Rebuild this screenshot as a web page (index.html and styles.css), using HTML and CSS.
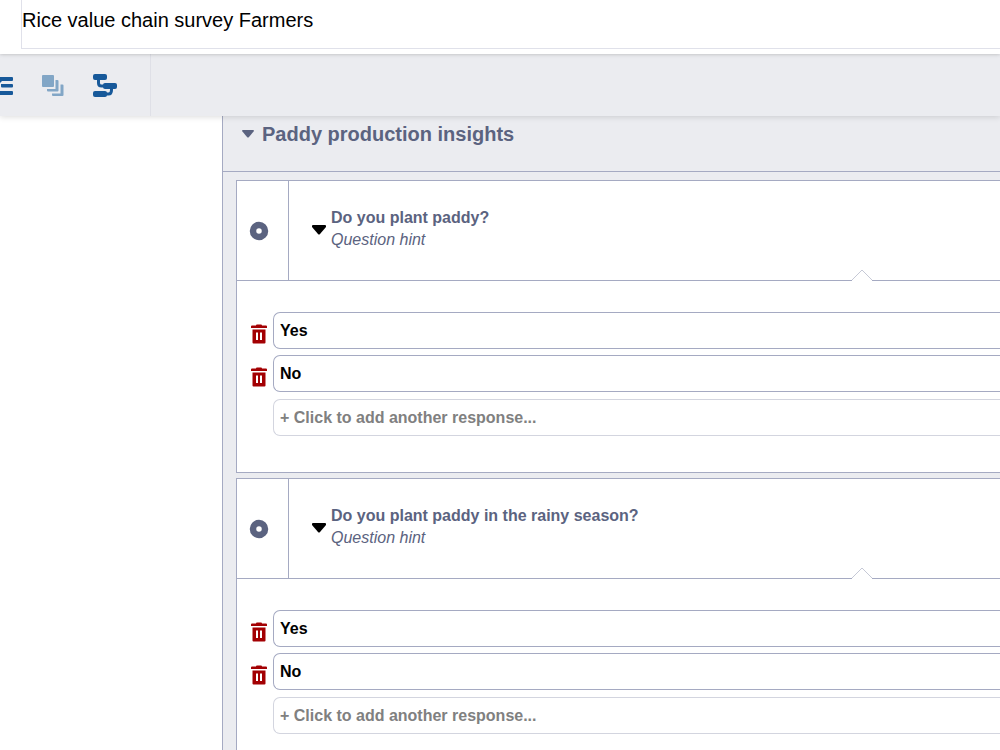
FILE: index.html
```html
<!DOCTYPE html>
<html lang="en">
<head>
    <meta charset="UTF-8">
    <meta name="viewport" content="width=device-width, initial-scale=1.0">
    <title>Rice value chain survey Farmers</title>
    <link rel="stylesheet" href="styles.css">
</head>
<body>
    <header class="topbar">
        <input class="form-title" type="text" value="Rice value chain survey Farmers" aria-label="Form title">
    </header>

    <nav class="toolbar">
        <div class="toolbar-buttons">
            <button type="button" class="tool" aria-label="List">
                <svg width="24" height="24" viewBox="0 0 24 24" fill="#17599a">
                    <path d="M0 3h23q1 0 1 1v2q0 1-1 1H13l-2 2H0zM12 10h11q1 0 1 1v1.500q0 1-1 1H13q-1 0-1-1zM11 17h12q1 0 1 1v2q0 1-1 1H11z"/>
                </svg>
            </button>
            <button type="button" class="tool" aria-label="Group questions">
                <svg width="24" height="24" viewBox="0 0 24 24" fill="#82a6c6">
                    <rect x="1" y="1" width="12" height="12" rx="1"/>
                    <path d="M14.500 6h2q1 0 1 1v9.500q0 1-1 1H7q-1 0-1-1V15h8.500z"/>
                    <path d="M19.500 10.500h2q1 0 1 1V21q0 1-1 1H12q-1 0-1-1v-1.500h8.500z"/>
                </svg>
            </button>
            <button type="button" class="tool" aria-label="Skip logic">
                <svg width="24" height="24" viewBox="0 0 24 24" fill="#17599a">
                    <rect x="0" y="0" width="14" height="6" rx="2"/>
                    <rect x="10" y="9" width="14" height="6" rx="2"/>
                    <rect x="0" y="17" width="14" height="6" rx="2"/>
                    <path d="M5.500 4v5q0 3 3 3h4M18.500 13v3q0 4-3 4h-4" fill="none" stroke="#17599a" stroke-width="3"/>
                </svg>
            </button>
        </div>
    </nav>

    <main class="canvas">
        <section class="group">
            <header class="group-header">
                <svg class="group-caret" width="12" height="8" viewBox="0 0 12 8"><path d="M1 0h10q1 0 1 1L7 7q-1 1-2 0L0 1q0-1 1-1z" fill="#5b6380"/></svg>
                <h2>Paddy production insights</h2>
            </header>

            <div class="questions">
                <article class="card">
                    <div class="card-header">
                        <div class="card-type">
                            <svg width="20" height="20" viewBox="0 0 20 20"><circle cx="10" cy="10" r="6" fill="none" stroke="#5b6380" stroke-width="6.500"/></svg>
                        </div>
                        <div class="card-question">
                            <svg class="card-caret" width="14" height="10" viewBox="0 0 14 10"><path d="M1 0h12q1 0 1 1v1L8 9q-1 1-2 0L0 2V1q0-1 1-1z"/></svg>
                            <div class="card-text">
                                <h3>Do you plant paddy?</h3>
                                <input class="hint" type="text" placeholder="Question hint" aria-label="Question hint">
                            </div>
                        </div>
                        <svg class="card-notch" width="22" height="12" viewBox="0 0 22 12"><path d="M1 11L11 1l10 10v1H1z" fill="#fff"/><path d="M1 11L11 1l10 10" fill="none" stroke="#c6c9d6"/></svg>
                    </div>
                    <div class="responses">
                        <div class="response">
                            <button type="button" class="delete" aria-label="Delete response"><svg width="16" height="20" viewBox="0 0 16 20"><path d="M5 1.500q0-1 1-1h4q1 0 1 1h4q1 0 1 1v1.500H0V2.500q0-1 1-1zM1.500 5.500h13v13q0 1-1 1h-11q-1 0-1-1zM5 8.500V16h2V8.500zM9 8.500V16h2V8.500z" fill="#a30003" fill-rule="evenodd"/></svg></button>
                            <input type="text" value="Yes" aria-label="Response">
                        </div>
                        <div class="response">
                            <button type="button" class="delete" aria-label="Delete response"><svg width="16" height="20" viewBox="0 0 16 20"><path d="M5 1.500q0-1 1-1h4q1 0 1 1h4q1 0 1 1v1.500H0V2.500q0-1 1-1zM1.500 5.500h13v13q0 1-1 1h-11q-1 0-1-1zM5 8.500V16h2V8.500zM9 8.500V16h2V8.500z" fill="#a30003" fill-rule="evenodd"/></svg></button>
                            <input type="text" value="No" aria-label="Response">
                        </div>
                        <button type="button" class="add-response">+ Click to add another response...</button>
                    </div>
                </article>

                <article class="card">
                    <div class="card-header">
                        <div class="card-type">
                            <svg width="20" height="20" viewBox="0 0 20 20"><circle cx="10" cy="10" r="6" fill="none" stroke="#5b6380" stroke-width="6.500"/></svg>
                        </div>
                        <div class="card-question">
                            <svg class="card-caret" width="14" height="10" viewBox="0 0 14 10"><path d="M1 0h12q1 0 1 1v1L8 9q-1 1-2 0L0 2V1q0-1 1-1z"/></svg>
                            <div class="card-text">
                                <h3>Do you plant paddy in the rainy season?</h3>
                                <input class="hint" type="text" placeholder="Question hint" aria-label="Question hint">
                            </div>
                        </div>
                        <svg class="card-notch" width="22" height="12" viewBox="0 0 22 12"><path d="M1 11L11 1l10 10v1H1z" fill="#fff"/><path d="M1 11L11 1l10 10" fill="none" stroke="#c6c9d6"/></svg>
                    </div>
                    <div class="responses">
                        <div class="response">
                            <button type="button" class="delete" aria-label="Delete response"><svg width="16" height="20" viewBox="0 0 16 20"><path d="M5 1.500q0-1 1-1h4q1 0 1 1h4q1 0 1 1v1.500H0V2.500q0-1 1-1zM1.500 5.500h13v13q0 1-1 1h-11q-1 0-1-1zM5 8.500V16h2V8.500zM9 8.500V16h2V8.500z" fill="#a30003" fill-rule="evenodd"/></svg></button>
                            <input type="text" value="Yes" aria-label="Response">
                        </div>
                        <div class="response">
                            <button type="button" class="delete" aria-label="Delete response"><svg width="16" height="20" viewBox="0 0 16 20"><path d="M5 1.500q0-1 1-1h4q1 0 1 1h4q1 0 1 1v1.500H0V2.500q0-1 1-1zM1.500 5.500h13v13q0 1-1 1h-11q-1 0-1-1zM5 8.500V16h2V8.500zM9 8.500V16h2V8.500z" fill="#a30003" fill-rule="evenodd"/></svg></button>
                            <input type="text" value="No" aria-label="Response">
                        </div>
                        <button type="button" class="add-response">+ Click to add another response...</button>
                    </div>
                </article>
            </div>
        </section>
    </main>
</body>
</html>
```

FILE: styles.css
```css
* {
    margin: 0;
    padding: 0;
    box-sizing: border-box;
}

body {
    display: flex;
    flex-direction: column;
    height: 100vh;
    overflow: hidden;
    font-family: "Liberation Sans", Arial, sans-serif;
    font-size: 16px;
    color: #5b6380;
    background: #fff;
}

input,
button {
    font-family: inherit;
    font-size: inherit;
    background: none;
    border: none;
    border-radius: 0;
    outline: none;
}

button {
    cursor: pointer;
}

svg {
    display: block;
    flex: none;
}

/* top bar */
.topbar {
    position: relative;
    z-index: 3;
    flex: none;
    padding: 0 0 5px 21px;
    background: #fff;
    box-shadow: 0 0 4px rgba(0, 0, 0, 0.25);
}

.form-title {
    display: block;
    width: 100%;
    height: 49px;
    padding-bottom: 8px;
    border-left: 1px solid #e0e1ea;
    border-bottom: 1px solid #e0e1ea;
    font-size: 20px;
    color: #000;
}

/* toolbar */
.toolbar {
    position: relative;
    z-index: 2;
    display: flex;
    flex: none;
    height: 62px;
    background: #ebecf0;
    box-shadow: 0 1px 6px rgba(0, 0, 0, 0.14);
}

.toolbar-buttons {
    display: flex;
    margin-left: -25px;
    padding-right: 19px;
    border-right: 1px solid #dfe0e7;
}

.tool {
    display: flex;
    align-items: center;
    justify-content: center;
    width: 52px;
    padding-top: 2px;
}

/* form canvas */
.canvas {
    flex: 1;
    min-height: 0;
    padding-left: 222px;
    overflow: hidden;
}

.group {
    border-left: 1px solid #a5aac2;
    background: #ebecf0;
}

.group-header {
    display: flex;
    align-items: center;
    gap: 8px;
    height: 56px;
    padding: 0 0 20px 19px;
    border-bottom: 1px solid #a5aac2;
}

.group-header h2 {
    font-size: 20px;
    line-height: 24px;
}

.questions {
    display: flex;
    flex-direction: column;
    gap: 5px;
    padding: 8px 0 8px 13px;
}

.card {
    border: 1px solid #a5aac2;
    border-right: none;
    background: #fff;
}

.card-header {
    position: relative;
    display: flex;
    height: 100px;
    border-bottom: 1px solid #a5aac2;
}

.card-type {
    display: flex;
    align-items: center;
    justify-content: center;
    width: 52px;
    padding-right: 7px;
    border-right: 1px solid #a5aac2;
}

.card-question {
    display: flex;
    flex: 1;
    align-items: center;
    gap: 5px;
    padding: 0 0 2px 23px;
}

.card-caret {
    fill: #000;
}

.card-text {
    flex: 1;
    padding-bottom: 1px;
}

.card-text h3 {
    font-size: 16px;
    line-height: 22px;
}

.hint {
    display: block;
    width: 100%;
    height: 22px;
    font-style: italic;
    color: #5b6380;
}

.hint::placeholder {
    color: #5b6380;
}

/* pointer up to the settings button */
.card-notch {
    position: absolute;
    right: 127px;
    bottom: -1px;
}

.responses {
    display: flex;
    flex-direction: column;
    gap: 6px;
    padding: 31px 0 36px 14px;
}

.response {
    display: flex;
    align-items: center;
    gap: 6px;
}

.delete {
    flex: none;
    padding-top: 6px;
}

.response input,
.add-response {
    height: 37px;
    padding-left: 6px;
    border: 1px solid #a5aac2;
    border-right: none;
    border-radius: 7px 0 0 7px;
    font-weight: bold;
    text-align: left;
    color: #000;
}

.response input {
    flex: 1;
}

.add-response {
    margin: 1px 0 0 22px;
    border-color: #d3d5df;
    color: #808080;
}
```
